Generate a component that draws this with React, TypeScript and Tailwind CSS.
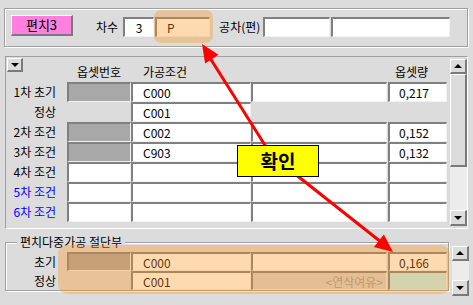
const sunken =
  "h-[20px] border-t-2 border-l-2 border-t-[#808080] border-l-[#808080] border-b border-r border-b-[#f2f2f2] border-r-[#f2f2f2] leading-[17px]";
const raised =
  "border-t border-l border-t-white border-l-white border-b-2 border-r-2 border-b-[#7a7a7a] border-r-[#7a7a7a]";

type Row = {
  label: string;
  blue?: boolean;
  off: "gray" | "white" | null;
  cond: string | null;
  ext: boolean;
  val: string | null;
};

const rows: Row[] = [
  { label: "1차 초기", off: "gray", cond: "C000", ext: true, val: "0,217" },
  { label: "정상", off: null, cond: "C001", ext: false, val: null },
  { label: "2차 조건", off: "gray", cond: "C002", ext: true, val: "0,152" },
  { label: "3차 조건", off: "gray", cond: "C903", ext: true, val: "0,132" },
  { label: "4차 조건", off: "white", cond: "", ext: true, val: "" },
  { label: "5차 조건", blue: true, off: "white", cond: "", ext: true, val: "" },
  { label: "6차 조건", blue: true, off: "white", cond: "", ext: true, val: "" },
];

function Scrollbar({ thumb }: { thumb: boolean }) {
  return (
    <div className="flex h-full w-[17px] flex-col">
      <div className={`flex h-[15px] items-center justify-center bg-[#dcdcdc] ${raised}`}>
        <span className="h-0 w-0 border-x-[4px] border-b-[4px] border-x-transparent border-b-black" />
      </div>
      {thumb && <div className={`h-[93px] bg-[#dcdcdc] ${raised}`} />}
      <div className="flex-1 bg-[#ececec]" />
      <div className={`flex h-[16px] items-center justify-center bg-[#dcdcdc] ${raised}`}>
        <span className="h-0 w-0 border-x-[4px] border-t-[4px] border-x-transparent border-t-black" />
      </div>
    </div>
  );
}

function GridRow({ r }: { r: Row }) {
  return (
    <div className="flex h-[20px]">
      <div className={`w-[61px] pr-[11px] text-right leading-[20px] ${r.blue ? "text-[#0000ff]" : ""}`}>
        {r.label}
      </div>
      {r.off ? (
        <div className={`w-[64px] ${sunken} ${r.off === "gray" ? "bg-[#a8a8a8]" : "bg-white"}`} />
      ) : (
        <div className="w-[64px]" />
      )}
      <div className={`w-[120px] bg-white pl-[10px] ${sunken}`}>{r.cond}</div>
      {r.ext ? <div className={`w-[136px] bg-white ${sunken}`} /> : <div className="w-[136px]" />}
      <div className="w-[1px]" />
      {r.val !== null ? (
        <div className={`w-[59px] bg-white pl-[9px] ${sunken}`}>{r.val}</div>
      ) : (
        <div className="w-[59px]" />
      )}
    </div>
  );
}

export default function App() {
  return (
    <div className="relative h-[305px] w-[473px] overflow-hidden bg-[#dcdcdc] font-['Noto_Sans_CJK_KR',sans-serif] text-[12px] text-black">
      {/* top bar */}
      <div className="mx-[4px] mr-[5px] mt-[8px] flex h-[39px] items-start border border-[#a0a0a0] pl-[6px] shadow-[inset_1px_1px_0_#fff,1px_1px_0_#fff]">
        <div className={`mt-[6px] flex h-[21px] w-[62px] items-center justify-center bg-[#ff80de] text-[13px] ${raised}`}>
          편치3
        </div>
        <div className="ml-[23px] mt-[8px] leading-[20px]">차수</div>
        <div className={`ml-[5px] mt-[8px] w-[31px] bg-white text-center ${sunken}`}>3</div>
        <div className={`ml-[1px] mt-[8px] w-[55px] bg-white pl-[10px] ${sunken}`}>P</div>
        <div className="ml-[9px] mt-[8px] leading-[20px]">공차(편)</div>
        <div className={`ml-[3px] mt-[8px] w-[67px] bg-white ${sunken}`} />
        <div className={`ml-[1px] mt-[8px] w-[119px] bg-white ${sunken}`} />
      </div>

      {/* main grid */}
      <div className="ml-[5px] mr-[5px] mt-[9px] flex h-[173px] border border-b-white border-l-[#a0a0a0] border-r-white border-t-[#a0a0a0]">
        <div className="flex w-[441px] flex-col">
          <div className="flex h-[25px]">
            <div className="w-[61px] pl-[1px] pt-[1px]">
              <div className={`flex h-[14px] w-[16px] items-center justify-center bg-[#dcdcdc] ${raised}`}>
                <span className="h-0 w-0 border-x-[4px] border-t-[4px] border-x-transparent border-t-black" />
              </div>
            </div>
            <div className="w-[64px] pt-[6px] text-center leading-[17px]">옵셋번호</div>
            <div className="w-[120px] pl-[12px] pt-[6px] leading-[17px]">가공조건</div>
            <div className="w-[137px]" />
            <div className="w-[59px] pl-[7px] pt-[6px] leading-[17px]">옵셋량</div>
          </div>
          {rows.map((r) => (
            <GridRow key={r.label} r={r} />
          ))}
        </div>
        <div className="ml-[3px] py-[2px]">
          <Scrollbar thumb />
        </div>
      </div>

      {/* bottom group */}
      <div className="ml-[5px] mt-[13px] flex">
        <div className="relative h-[49px] w-[444px] border border-[#a0a0a0] pt-[9px] shadow-[inset_1px_1px_0_#fff,1px_1px_0_#fff]">
          <div className="absolute left-[11px] top-[-10px] bg-[#dcdcdc] px-[3px] leading-[17px]">편치다중가공 절단부</div>
          <div className="flex h-[19px]">
            <div className="w-[61px] pr-[11px] text-right leading-[19px]">초기</div>
            <div className={`w-[64px] !h-[19px] bg-[#a8a8a8] ${sunken}`} />
            <div className={`w-[120px] !h-[19px] bg-white pl-[10px] ${sunken}`}>C000</div>
            <div className={`w-[136px] !h-[19px] bg-white ${sunken}`} />
            <div className="w-[1px]" />
            <div className={`w-[59px] !h-[19px] bg-white pl-[9px] ${sunken}`}>0,166</div>
          </div>
          <div className="flex h-[19px]">
            <div className="w-[61px] pr-[11px] text-right leading-[19px]">정상</div>
            <div className="w-[64px]" />
            <div className={`w-[120px] !h-[19px] bg-white pl-[10px] ${sunken}`}>C001</div>
            <div className={`w-[136px] !h-[19px] bg-[#d6d6d6] pr-[3px] text-right text-[#9a9a9a] ${sunken}`}>
              &lt;연삭여유&gt;
            </div>
            <div className="w-[1px]" />
            <div className={`w-[59px] !h-[19px] bg-[#bff4fb] ${sunken}`} />
          </div>
        </div>
        <div className="ml-[3px] mt-[4px] h-[50px]">
          <Scrollbar thumb={false} />
        </div>
      </div>

      {/* annotations */}
      <div className="absolute left-[154px] top-[10px] h-[33px] w-[59px] rounded-[7px] bg-[rgba(255,150,28,0.35)]" />
      <div className="absolute left-[58px] top-[245px] h-[49px] w-[392px] rounded-[9px] bg-[rgba(255,150,28,0.35)]" />
      <svg className="pointer-events-none absolute left-0 top-0" width="473" height="305" viewBox="0 0 473 305">
        <line x1="268" y1="150" x2="210" y2="58" stroke="#ff0000" strokeWidth="3" />
        <polygon points="202,44 218.5,54.8 205.1,63.4" fill="#ff0000" />
        <line x1="290" y1="170" x2="381" y2="242" stroke="#ff0000" strokeWidth="3" />
        <polygon points="393,252 373.9,247 383.9,234.6" fill="#ff0000" />
      </svg>
      <div className="absolute left-[237px] top-[145px] flex h-[32px] w-[82px] items-center justify-center border border-black bg-[#ffff00] text-[19px] font-bold">
        확인
      </div>
    </div>
  );
}
